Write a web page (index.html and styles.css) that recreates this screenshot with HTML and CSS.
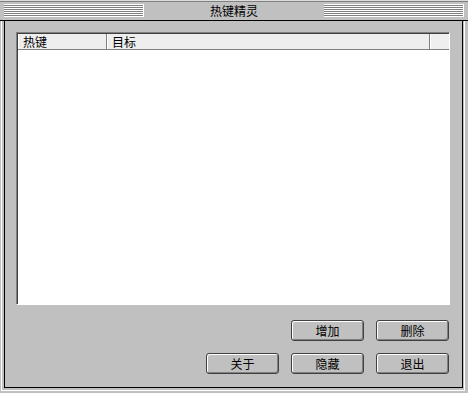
FILE: index.html
```html
<!DOCTYPE html>
<html lang="zh-CN">
<head>
  <meta charset="UTF-8">
  <title>热键精灵</title>
  <link rel="stylesheet" href="styles.css">
</head>
<body>
  <div class="window">
    <!-- Title bar -->
    <div class="titlebar">
      <div class="stripes"></div>
      <div class="title">热键精灵</div>
      <div class="stripes"></div>
    </div>

    <!-- Client area -->
    <div class="frame">
      <div class="panel">
        <div class="list">
          <div class="list-head">
            <div class="col col-key">热键</div>
            <div class="col col-target">目标</div>
            <div class="col col-rest"></div>
          </div>
          <div class="list-body"></div>
        </div>

        <div class="buttons">
          <div class="btn-row">
            <button class="btn">增加</button>
            <button class="btn">删除</button>
          </div>
          <div class="btn-row">
            <button class="btn">关于</button>
            <button class="btn">隐藏</button>
            <button class="btn">退出</button>
          </div>
        </div>
      </div>
    </div>
  </div>
</body>
</html>
```

FILE: styles.css
```css
* {
  margin: 0;
  padding: 0;
  box-sizing: border-box;
}

body {
  font-family: "Noto Sans CJK SC", "DejaVu Sans", sans-serif;
  font-size: 12px;
  color: #000;
  background: #c0c0c0;
}

.window {
  width: 468px;
  height: 393px;
  background: #c0c0c0;
  border-top: 1px solid #dcdcdc;
  display: flex;
  flex-direction: column;
}

.titlebar {
  height: 20px;
  display: flex;
  align-items: center;
  padding: 0 4px;
  border-bottom: 1px solid #000;
  box-shadow: 0 1px 0 #808080 inset;
}

.stripes {
  width: 140px;
  height: 13px;
  background: repeating-linear-gradient(to bottom, #ffffff 0, #ffffff 1px, #808080 1px, #808080 2px);
  border-right: 1px solid #ffffff;
}

.title {
  flex: 1;
  text-align: center;
  line-height: 18px;
}

.frame {
  flex: 1;
  margin: 0 3px 2px 1px;
  padding: 0 1px 2px 2px;
  border: 1px solid #ffffff;
  border-top: none;
}

.panel {
  height: 100%;
  border: 1px solid #000;
  border-top: none;
  padding: 11px 12px 12px 11px;
  display: flex;
  flex-direction: column;
}

.list {
  height: 273px;
  display: flex;
  flex-direction: column;
  border-top: 1px solid #808080;
  border-left: 1px solid #808080;
  border-right: 1px solid #ffffff;
  border-bottom: 1px solid #ffffff;
}

.list-head {
  display: flex;
  height: 17px;
  background: #eeeeee;
  border-top: 1px solid #404040;
  border-left: 1px solid #404040;
}

.col {
  line-height: 15px;
  padding-left: 5px;
  border-right: 1px solid #808080;
  border-bottom: 1px solid #808080;
  box-shadow: 1px 0 0 #ffffff inset;
}

.col-key {
  width: 89px;
}

.col-target {
  width: 323px;
}

.col-rest {
  flex: 1;
  border-right: none;
}

.list-body {
  flex: 1;
  background: #ffffff;
  border-left: 1px solid #404040;
}

.buttons {
  margin-top: 15px;
  display: flex;
  flex-direction: column;
  gap: 12px;
  padding-right: 1px;
}

.btn-row {
  display: flex;
  justify-content: flex-end;
  gap: 12px;
}

.btn {
  width: 73px;
  height: 21px;
  font-family: inherit;
  font-size: 12px;
  color: #000;
  background: #c0c0c0;
  border: 1px solid #404040;
  border-radius: 3px;
  box-shadow: inset 1px 1px 0 #ffffff, inset -1px -1px 0 #808080;
}
```
